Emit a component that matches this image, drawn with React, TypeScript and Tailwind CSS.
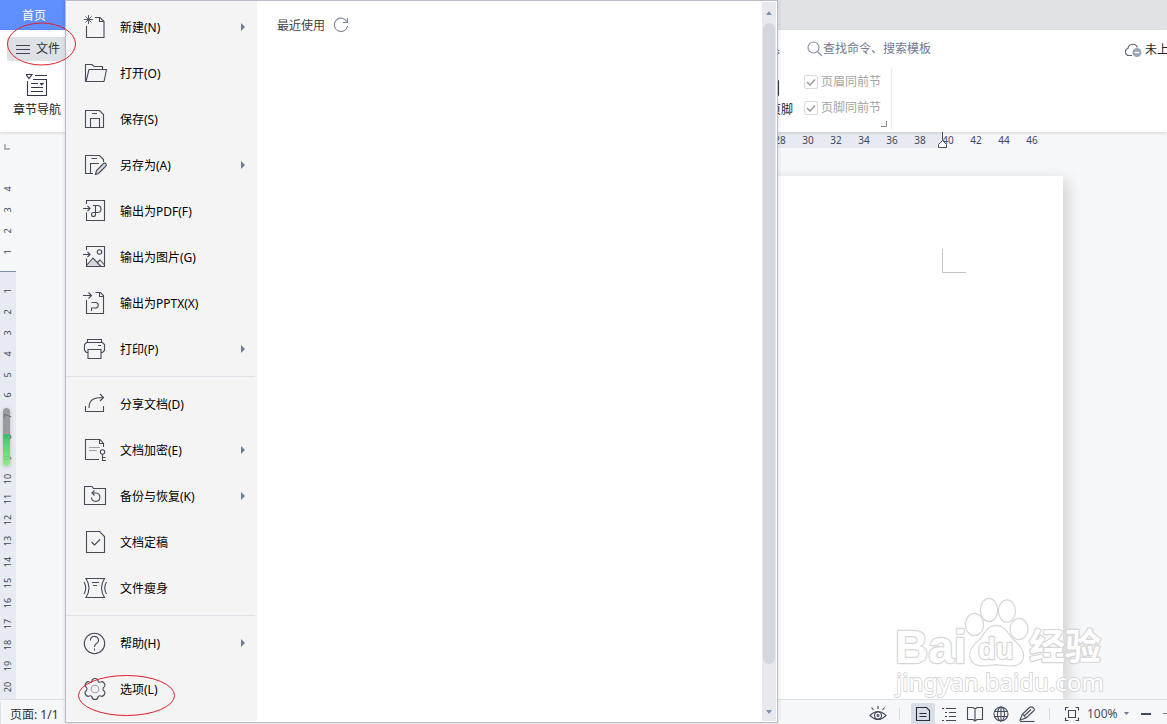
import React from 'react';

type IconProps = {
  children: React.ReactNode;
  size?: string;
  box?: number;
};

type MenuEntry = {
  label: string;
  icon: React.ReactNode;
  submenu?: boolean;
};

const Icon = ({ children, size = 'size-6', box = 24 }: IconProps) => (
  <svg
    className={`${size} shrink-0 overflow-visible`}
    viewBox={`0 0 ${box} ${box}`}
    fill="none"
    stroke="#454b5b"
    strokeWidth="1.1"
    aria-hidden="true"
  >
    {children}
  </svg>
);

const exportFrame = (
  <>
    <path d="M3.5 5V1.5H21.5V21.5H3.5V13.5" />
    <path d="M0 9.5H7M4.5 7L7 9.5L4.5 12" />
  </>
);

const fileActions: MenuEntry[] = [
  {
    label: '新建(N)',
    submenu: true,
    icon: (
      <>
        <path d="M12 2.5H17L21 6.5V22.5H3.5V11" />
        <path d="M16.5 2.5V6.5H21" />
        <path d="M5.5 0V9M1 4.5H10M2.5 1.5L8.5 7.5M8.5 1.5L2.5 7.5" strokeWidth="0.9" />
      </>
    ),
  },
  {
    label: '打开(O)',
    icon: (
      <>
        <path d="M3 20.5L2.5 20V3.5H9L11 5.5H19.5V8" />
        <path d="M3 20.5L6 8.5H23.5L21 20.5Z" />
      </>
    ),
  },
  {
    label: '保存(S)',
    icon: (
      <>
        <path d="M2.5 3.5H16.5L20.5 7.5V20.5H2.5Z" />
        <path d="M7.5 20.5V11.5H16.5V20.5M9 6.5H14" />
      </>
    ),
  },
  {
    label: '另存为(A)',
    submenu: true,
    icon: (
      <>
        <path d="M10 20.5H2.5V2.5H16.5L20.5 6.5V9" />
        <path d="M7.5 20.5V10.5H16M8.5 5.5H14" />
        <path d="M12.5 21.5L13.5 17.5L20.5 10.5Q22 9.5 23 11T22.5 13.5L15.5 20.5Z" fill="#d4d7dc" />
      </>
    ),
  },
  {
    label: '输出为PDF(F)',
    icon: (
      <>
        {exportFrame}
        <path d="M10 6.5H14.5A3 3 0 0 1 14.5 13.5H10.5A2 2 0 1 0 12.5 15.5V6.5" />
      </>
    ),
  },
  {
    label: '输出为图片(G)',
    icon: (
      <>
        <path d="M4 20.5L10 13L17.5 21H4Z" fill="#d4d7dc" stroke="none" />
        {exportFrame}
        <circle cx="16.5" cy="7" r="2.2" />
        <path d="M3.5 20.5L10 13L18 21.5M14.5 17.5L17 15L21.5 20" />
      </>
    ),
  },
  {
    label: '输出为PPTX(X)',
    icon: (
      <>
        <path d="M12.5 1.5H17.5L20.5 4.5V22.5H3.5V9" />
        <path d="M16.5 1.5V5.5H20.5" />
        <path d="M0 4.5H8.5M5.5 1.5L8.5 4.5L5.5 7.5" />
        <path d="M8.5 11.5H13A2.8 2.8 0 0 1 13 17H8.5V20" />
      </>
    ),
  },
  {
    label: '打印(P)',
    submenu: true,
    icon: (
      <>
        <path d="M4.5 5.5V2.5H18.5V5.5M5 15.5H3.5L1.5 13.5V7.5L3.5 5.5H19.5L21.5 7.5V13.5L19.5 15.5H18" />
        <path d="M5 12.5H18V21.5H5ZM15 8.5H18" />
      </>
    ),
  },
];

const documentActions: MenuEntry[] = [
  {
    label: '分享文档(D)',
    icon: <path d="M2.5 14V19.5H20.5V14M6 16C6 8 10 5.5 20.5 5.5M17 2L20.5 5.5L17 9" />,
  },
  {
    label: '文档加密(E)',
    submenu: true,
    icon: (
      <>
        <path d="M20.5 9V5.5L17 1.5H2.5V21.5H16M16.5 1.5V5.5H20.5" />
        <path d="M6 9.5H17M6 12.5H14" stroke="#9a9fab" />
        <circle cx="19.5" cy="14" r="2.2" />
        <path d="M19.5 16.2V22.5H23M19.5 19.5H22.5" />
      </>
    ),
  },
  {
    label: '备份与恢复(K)',
    submenu: true,
    icon: (
      <>
        <path d="M1.5 2.5H9L10.5 4.5H22.5V20.5H1.5Z" />
        <path d="M9 9H13A4.2 4.2 0 1 1 8.5 13.5M11.5 6.5L9 9L11.5 11.5" />
      </>
    ),
  },
  {
    label: '文档定稿',
    icon: <path d="M3.5 1.5H16.5L21.5 6.5V22.5H3.5ZM8.5 12L11.5 15L17 9.5" />,
  },
  {
    label: '文件瘦身',
    icon: (
      <>
        <path d="M3 2.5H21.5Q15.5 12 21.5 21.5H3Q9 12 3 2.5Z" />
        <path d="M1 6Q4.5 12 1 18M23.5 6Q20 12 23.5 18M9 6.5H16M10 9.5H14" />
      </>
    ),
  },
];

const appActions: MenuEntry[] = [
  {
    label: '帮助(H)',
    submenu: true,
    icon: (
      <>
        <circle cx="11.5" cy="12.5" r="10.2" />
        <path d="M7.5 9.5A4 3.8 0 1 1 13.5 12.5Q11.5 13.5 11.5 16M11.5 17.5V19.5" />
      </>
    ),
  },
  {
    label: '选项(L)',
    icon: (
      <>
        <path d="M8.8 4.6Q9 1.5 12 1.5T15.2 4.6Q16.5 6 18.6 4.6Q21 4.6 22 8Q22.5 9.5 20.4 10.6Q19.6 12 20.4 13.4Q22.5 14.5 22 16Q21 19.4 18.6 19.4Q16.5 18 15.2 19.4Q15 22.5 12 22.5T8.8 19.4Q7.5 18 5.4 19.4Q3 19.4 2 16Q1.5 14.5 3.6 13.4Q4.4 12 3.6 10.6Q1.5 9.5 2 8Q3 4.6 5.4 4.6Q7.5 6 8.8 4.6Z" />
        <circle cx="12" cy="12" r="3.8" stroke="#9a9fab" />
      </>
    ),
  },
];

const columnNumbers = [28, 30, 32, 34, 36, 38, 40, 42, 44, 46];
const marginNumbers = [4, 3, 2, 1];
const rowNumbers = Array.from({ length: 20 }, (_, i) => i + 1);

const MenuGroup = ({ items }: { items: MenuEntry[] }) => (
  <ul>
    {items.map((item) => (
      <li key={item.label}>
        <button className="flex h-[46px] w-full items-center gap-[13px] pr-3 pl-[17px] text-left text-black">
          <Icon>{item.icon}</Icon>
          <span className="flex-1 pt-0.5">{item.label}</span>
          {item.submenu && (
            <svg className="h-2 w-1" viewBox="0 0 4 8" fill="#6f7c98" aria-hidden="true">
              <path d="M0 0L4 4L0 8Z" />
            </svg>
          )}
        </button>
      </li>
    ))}
  </ul>
);

const FileMenu = () => (
  <div className="absolute top-0 bottom-px left-[65px] z-10 flex w-[713px] border border-[#b9bcc6] bg-white pt-px pr-px pb-px shadow-[0_0_4px_rgba(0,0,0,0.15)]">
    <nav className="-mt-px w-[191px] shrink-0 bg-[#f4f4f4] pt-[3px]">
      <MenuGroup items={fileActions} />
      <hr className="my-1 mr-0.5 border-[#dfe1e8]" />
      <MenuGroup items={documentActions} />
      <hr className="my-1 mr-0.5 border-[#dfe1e8]" />
      <MenuGroup items={appActions} />
    </nav>
    <section className="flex-1 pt-[15px] pl-5">
      <div className="flex h-4 items-center gap-2">
        <h2 className="pt-0.5 text-[#444]">最近使用</h2>
        <button aria-label="刷新">
          <svg className="size-4" viewBox="0 0 16 16" fill="none" stroke="#7e8594" strokeWidth="1.1" aria-hidden="true">
            <path d="M13.8 4.5A6.7 6.7 0 1 0 14.6 9M14.5 1V5.5H10" />
          </svg>
        </button>
      </div>
    </section>
    <div className="flex w-3.5 flex-col items-center bg-[#e7e9ee]">
      <span className="flex h-[21px] items-center">
        <svg className="h-1 w-1.5" viewBox="0 0 6 4" fill="#8390ad" aria-hidden="true">
          <path d="M0 4L3 0L6 4Z" />
        </svg>
      </span>
      <span className="w-3 flex-1 rounded-full bg-[#d4d7e0]" />
      <span className="flex h-[57px] items-end pb-[7px]">
        <svg className="h-1 w-1.5" viewBox="0 0 6 4" fill="#8390ad" aria-hidden="true">
          <path d="M0 0L3 4L6 0Z" />
        </svg>
      </span>
    </div>
  </div>
);

const SectionCheck = ({ label }: { label: string }) => (
  <label className="flex h-[26px] items-center gap-[3px] text-[#a3a3a3]">
    <span className="grid size-3.5 place-items-center">
      <input
        type="checkbox"
        defaultChecked
        disabled
        className="col-start-1 row-start-1 size-3.5 appearance-none rounded-xs border border-[#d9d9d9] bg-white"
      />
      <svg className="col-start-1 row-start-1 size-2.5" viewBox="0 0 10 10" fill="none" stroke="#a0a0a0" strokeWidth="1.6" aria-hidden="true">
        <path d="M1 5L4 8L9 2.5" />
      </svg>
    </span>
    {label}
  </label>
);

const Ribbon = () => (
  <div className="z-1 flex h-[102px] shrink-0 bg-white shadow-[0_1px_3px_rgba(0,0,0,0.14)]">
    <div className="w-[72px] shrink-0 pt-[7px]">
      <button className="ml-[7px] flex h-6 w-[65px] items-center gap-[6px] rounded-xs bg-[#dde1e6] pl-[9px] text-[#333]">
        <svg className="h-[11px] w-3.5" viewBox="0 0 14 11" stroke="#3f4554" strokeWidth="1" aria-hidden="true">
          <path d="M0 1.5H14M0 5.5H14M0 9.5H14" />
        </svg>
        文件
      </button>
      <button className="mt-3 flex w-[74px] flex-col items-center gap-[5px] text-[#222]">
        <svg className="h-6 w-[22px]" viewBox="0 0 22 24" fill="none" stroke="#30374a" strokeWidth="1.1" aria-hidden="true">
          <path d="M0 1.5H6L3 5.5ZM9 2.5H21M1.5 8V22.5H20.5V6.5H7M14.5 10.5H17L15.7 12Z" />
          <path d="M5 10.5H12M5 14.5H17M5 18.5H17" />
        </svg>
        章节导航
      </button>
    </div>
    <div className="ml-[671px] w-[149px] shrink-0">
      <div className="flex h-[38px] items-center">
        <button className="mr-[27px] w-[37px] shrink-0 text-right text-[#2c4f8f]">工具</button>
        <label className="flex shrink-0 items-center">
          <span className="sr-only">搜索</span>
          <svg className="size-4" viewBox="0 0 16 16" fill="none" stroke="#8b93a7" strokeWidth="1.2" aria-hidden="true">
            <circle cx="6.5" cy="6.5" r="5.5" />
            <path d="M10.5 10.5L15 15" />
          </svg>
          <input
            type="text"
            placeholder="查找命令、搜索模板"
            className="w-[120px] bg-transparent leading-4 outline-none placeholder:text-[#71798f]"
          />
        </label>
      </div>
      <div className="flex h-[61px] border-r border-[#e9eaed]">
        <button className="flex w-[52px] shrink-0 flex-col items-center gap-1 pt-3 text-[#222] whitespace-nowrap">
          <svg className="h-4 w-5" viewBox="0 0 20 16" fill="none" stroke="#30374a" aria-hidden="true">
            <path d="M0 0.5H19.5V15.5H0" />
          </svg>
          <span className="pt-0.5">页眉页脚</span>
        </button>
        <div className="mt-px ml-[9px] shrink-0">
          <SectionCheck label="页眉同前节" />
          <SectionCheck label="页脚同前节" />
        </div>
        <svg className="mb-0.5 size-1.5 shrink-0 self-end" viewBox="0 0 6 6" fill="none" stroke="#7e88a0" aria-hidden="true">
          <path d="M5.5 0V5.5H0" />
        </svg>
      </div>
    </div>
    <button className="-mr-0.5 ml-auto flex h-10 shrink-0 items-center gap-[3px] text-[#222] whitespace-nowrap">
      <svg className="h-4 w-[17px]" viewBox="0 0 17 16" fill="none" stroke="#5b6375" strokeWidth="1.1" aria-hidden="true">
        <path d="M7 13.5H4.5A3.7 3.7 0 0 1 3 6.3A4.8 4.8 0 0 1 12.3 5.5" />
        <circle cx="12" cy="10.5" r="4.5" fill="#9ca5b9" stroke="none" />
        <path d="M9.7 10.5H14.3" stroke="#fff" strokeWidth="1.3" />
      </svg>
      未上
    </button>
  </div>
);

const VerticalRuler = () => (
  <div className="flex w-4 shrink-0 flex-col text-[9px] leading-3 text-[#3f4860]">
    <div className="flex h-[46px] items-center pb-4 pl-1">
      <svg className="size-1.5" viewBox="0 0 6 6" fill="none" stroke="#b0b4c0" strokeWidth="2" aria-hidden="true">
        <path d="M1 0V5H6" />
      </svg>
    </div>
    {marginNumbers.map((n) => (
      <span key={n} className="flex h-[21px] items-center justify-center">
        <span className="-rotate-90">{n}</span>
      </span>
    ))}
    <div className="mt-[9px] flex flex-1 flex-col border-t border-[#7d90a8] bg-[#e7eaf0] pt-[9px] pb-0.5">
      {rowNumbers.map((n) => (
        <span key={n} className="flex flex-1 items-center justify-center">
          <span className="-rotate-90">{n}</span>
        </span>
      ))}
    </div>
  </div>
);

const HorizontalRuler = () => (
  <div className="flex h-4 shrink-0">
    <div className="relative ml-[350px] flex w-[576px] shrink-0 bg-[#e7eaf0] pl-[400px] text-[10px] leading-4 text-[#3f4860]">
      {columnNumbers.map((n) => (
        <span key={n} className="w-7 shrink-0 text-center">
          {n}
        </span>
      ))}
      <svg className="absolute top-0 -right-1.5 h-4 w-2.5" viewBox="0 0 10 16" fill="#fff" stroke="#4a5064" aria-hidden="true">
        <path d="M4.5 0V9M0.5 15.5V12.5L4.5 8.5L8.5 12.5V15.5Z" />
      </svg>
    </div>
  </div>
);

const Workspace = () => (
  <main className="relative flex min-h-0 flex-1 overflow-hidden">
    <VerticalRuler />
    <div className="flex min-w-0 flex-1 flex-col overflow-hidden">
      <HorizontalRuler />
      <div className="mt-7 ml-[253px] flex w-[794px] flex-1 justify-end bg-white pt-[73px] pr-[97px] shadow-[5px_4px_14px_rgba(0,0,0,0.15)]">
        <span className="size-6 border-b border-l border-[#c4c4c4]" />
      </div>
    </div>
    <span className="absolute top-[276px] left-[3px] h-[58px] w-[7px] rounded-full bg-linear-to-b from-[#77797c]/70 from-45% via-[#20c465]/90 via-45% to-[#7df07a]/90 shadow-[0_1px_4px_rgba(0,0,0,0.2)]" />
  </main>
);

const StatusBar = () => (
  <footer className="flex h-[25px] shrink-0 border-t border-[#dde0e5] bg-[#f5f7f9] pt-0.5 text-[#333]">
    <span className="border-l border-[#dde0e5] pt-[5px] pl-[9px]">页面: 1/1</span>
    <div className="ml-auto flex h-[22px] shrink-0 items-center pt-px">
      <button className="flex w-[26px] justify-center" aria-label="护眼模式">
        <Icon size="size-[18px]" box={18}>
          <path d="M1 10.5Q9 2.5 17 10.5Q9 18.5 1 10.5Z" />
          <circle cx="9" cy="10.5" r="3.5" />
          <circle cx="9" cy="10.5" r="1" />
          <path d="M9 1V4M2.5 2.5L4.5 5M15.5 2.5L13.5 5" />
        </Icon>
      </button>
      <span className="mr-[11px] ml-2 h-3 w-px bg-[#d8dbe1]" />
      <button className="flex h-full w-6 items-center justify-center rounded-t-xs bg-[#d9dee6]" aria-label="页面视图">
        <Icon size="size-4" box={16}>
          <path d="M1.5 1.5H11.5L14.5 4.5V14.5H1.5ZM4.5 7.5H11.5M4.5 10.5H11.5" stroke="#222a3d" />
        </Icon>
      </button>
      <button className="ml-px flex w-[26px] justify-center" aria-label="大纲视图">
        <Icon size="size-4" box={16}>
          <path d="M1 2.5H3M5 2.5H15M4 6.5H6M8 6.5H15M4 10.5H6M8 10.5H15M1 14.5H3M5 14.5H15" />
        </Icon>
      </button>
      <button className="flex w-[26px] justify-center" aria-label="阅读版式">
        <Icon size="size-4" box={16}>
          <path d="M0.5 1.5H6L8 3L10 1.5H15.5V13.5H10L8 15L6 13.5H0.5ZM8 3V15" />
        </Icon>
      </button>
      <button className="flex w-[26px] justify-center" aria-label="Web版式">
        <Icon size="size-4" box={16}>
          <circle cx="8" cy="8" r="7" />
          <ellipse cx="8" cy="8" rx="3.5" ry="7" />
          <path d="M8 1V15M1.5 5.5H14.5M1.5 10.5H14.5" />
        </Icon>
      </button>
      <button className="flex w-[26px] justify-center" aria-label="写作模式">
        <Icon size="size-4" box={16}>
          <path d="M1 14L3.5 8L10.5 1.5Q12.5 0 14.5 2T14 5.5L7 12L1 14ZM3.5 8L7 12M5.5 9.5L12 3.5" />
          <path d="M1 15.5H15.5" />
        </Icon>
      </button>
      <span className="mx-[9px] h-3 w-px bg-[#d8dbe1]" />
      <button className="flex w-[26px] justify-center" aria-label="适合页面">
        <Icon size="size-4" box={16}>
          <path d="M1.5 4.5V1.5H4.5M11.5 1.5H14.5V4.5M14.5 11.5V14.5H11.5M4.5 14.5H1.5V11.5M4.5 4.5H11.5V11.5H4.5Z" />
        </Icon>
      </button>
      <button className="ml-0.5 flex w-[42px] items-center justify-between text-[#44506a]">
        100%
        <svg className="h-[3px] w-[5px]" viewBox="0 0 5 3" fill="#6f7c98" aria-hidden="true">
          <path d="M0 0H5L2.5 3Z" />
        </svg>
      </button>
      <button className="ml-3 flex h-4 w-2.5 items-center" aria-label="缩小">
        <span className="h-0.5 w-full bg-[#3d4a64]" />
      </button>
      <span className="ml-3 h-px w-1 bg-[#6f7c98]" />
    </div>
  </footer>
);

const Watermark = () => (
  <svg
    className="pointer-events-none absolute right-[55px] bottom-6 h-[104px] w-[220px] font-['Noto_Sans','Noto_Sans_CJK_SC',sans-serif]"
    viewBox="892 596 220 104"
    fill="#fff"
    stroke="#d6d6d6"
    strokeWidth="2.4"
    strokeLinejoin="round"
    paintOrder="stroke"
  >
    <text x="895" y="663" className="font-['Liberation_Sans',sans-serif] text-[46px] font-bold">Bai</text>
    <ellipse cx="989" cy="610" rx="8" ry="11" />
    <ellipse cx="1007" cy="611" rx="8" ry="10.5" />
    <ellipse cx="974.5" cy="624.5" rx="8.5" ry="10.5" />
    <ellipse cx="1019" cy="629" rx="8.5" ry="10" />
    <path d="M996 626C1005 626 1008 635 1013 640C1021 647 1025 653 1022 660C1018 668 1006 665 996 664C987 665 975 668 971 659C968 652 973 646 980 640C985 635 987 626 996 626Z" />
    <text x="978" y="659" className="font-['Liberation_Sans',sans-serif] text-[29px] font-bold">du</text>
    <text x="1029" y="660" className="text-[36px] font-bold">经验</text>
    <text x="896" y="691" strokeWidth="1.8" className="text-[24px]">jingyan.baidu.com</text>
  </svg>
);

const App = () => {
  return (
    <div className="relative flex h-screen min-h-[724px] w-full flex-col overflow-hidden bg-[#f5f7f9] font-['Noto_Sans','Noto_Sans_CJK_SC',sans-serif] text-xs leading-4">
      <header className="flex h-[30px] shrink-0 bg-[#e1e2e6]">
        <button className="w-[72px] bg-[#5f8ffc] pt-0.5 pr-1 text-white">首页</button>
      </header>
      <Ribbon />
      <Workspace />
      <StatusBar />
      <Watermark />
      <FileMenu />

      {/* red marks around the file button and the options entry */}
      <svg className="pointer-events-none absolute top-[22px] left-[6px] z-20 h-11 w-[71px]" viewBox="0 0 71 44" fill="none" stroke="#e3202b" aria-hidden="true">
        <ellipse cx="35.5" cy="22" rx="34" ry="21" />
      </svg>
      <svg className="pointer-events-none absolute top-[674px] left-[77px] z-20 h-[43px] w-[99px]" viewBox="0 0 99 43" fill="none" stroke="#e3202b" aria-hidden="true">
        <ellipse cx="49.5" cy="21.5" rx="48" ry="20" />
      </svg>
    </div>
  );
};

export default App;
